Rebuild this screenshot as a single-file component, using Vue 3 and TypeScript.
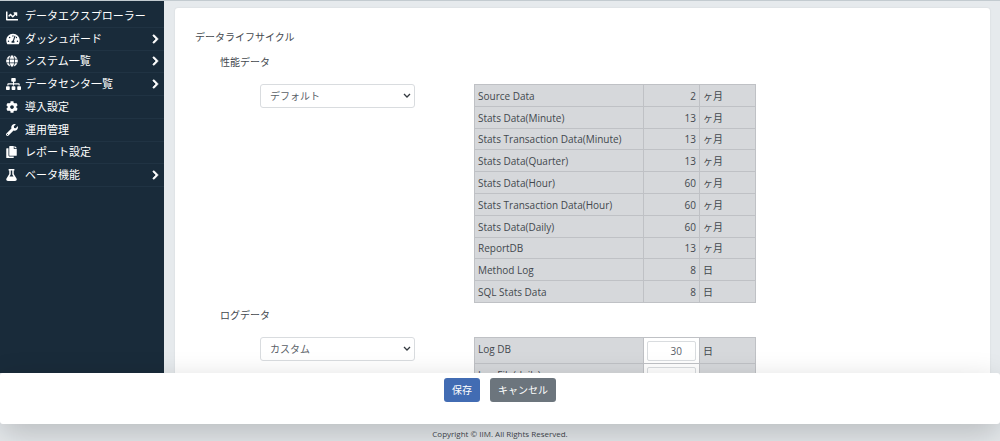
<script setup lang="ts">
interface MenuItem {
  label: string
  box: string
  size: number
  path: string
  children?: boolean
}
interface Retention {
  name: string
  value: number
  unit: string
}

const menu: MenuItem[] = [
  {
    label: 'データエクスプローラー', box: '0 0 512 512', size: 12,
    path: 'M496 384H64V80c0-8.84-7.16-16-16-16H16C7.16 64 0 71.16 0 80v336c0 17.67 14.33 32 32 32h464c8.84 0 16-7.16 16-16v-32c0-8.84-7.16-16-16-16zM464 96H345.94c-21.38 0-32.09 25.85-16.97 40.97l32.4 32.4L288 242.75l-73.37-73.37c-12.5-12.5-32.76-12.5-45.25 0l-68.69 68.69c-6.25 6.25-6.25 16.38 0 22.63l22.62 22.62c6.25 6.25 16.38 6.25 22.63 0L192 237.25l73.37 73.37c12.5 12.5 32.76 12.5 45.25 0l96-96 32.4 32.4c15.12 15.12 40.97 4.41 40.97-16.97V112c.01-8.84-7.15-16-15.99-16z',
  },
  {
    label: 'ダッシュボード', box: '0 0 576 512', size: 14, children: true,
    path: 'M288 32C128.94 32 0 160.94 0 320c0 52.8 14.25 102.26 39.06 144.8 5.61 9.62 16.3 15.2 27.44 15.2h443c11.14 0 21.83-5.58 27.44-15.2C561.75 422.26 576 372.8 576 320c0-159.06-128.94-288-288-288zm0 64c14.71 0 26.58 10.13 30.32 23.65-1.11 2.26-2.64 4.23-3.45 6.67l-9.22 27.67c-5.13 3.49-10.97 6.01-17.64 6.01-17.67 0-32-14.33-32-32S270.33 96 288 96zM96 384c-17.67 0-32-14.33-32-32s14.33-32 32-32 32 14.33 32 32-14.33 32-32 32zm48-160c-17.67 0-32-14.33-32-32s14.33-32 32-32 32 14.33 32 32-14.33 32-32 32zm246.77-72.41l-61.33 184C343.13 347.33 352 364.54 352 384c0 11.72-3.38 22.55-8.88 32H232.88c-5.5-9.45-8.88-20.28-8.88-32 0-33.94 26.5-61.43 59.9-63.59l61.34-184.01c4.17-12.56 17.73-19.45 30.36-15.17 12.57 4.19 19.35 17.79 15.17 30.36zm14.66 57.2l15.52-46.55c3.47-1.29 7.13-2.23 11.05-2.23 17.67 0 32 14.33 32 32s-14.33 32-32 32c-11.38-.01-20.89-6.28-26.57-15.22zM480 384c-17.67 0-32-14.33-32-32s14.33-32 32-32 32 14.33 32 32-14.33 32-32 32z',
  },
  {
    label: 'システム一覧', box: '0 0 496 512', size: 12, children: true,
    path: 'M336.5 160C322 70.7 287.8 8 248 8s-74 62.7-88.5 152h177zM152 256c0 22.2 1.2 43.5 3.3 64h185.3c2.1-20.5 3.3-41.8 3.3-64s-1.2-43.5-3.3-64H155.3c-2.1 20.5-3.3 41.8-3.3 64zm324.7-96c-28.6-67.9-86.5-120.4-158-141.6 24.4 33.8 41.2 84.7 50 141.6h108zM177.2 18.4C105.8 39.6 47.8 92.1 19.3 160h108c8.7-56.9 25.5-107.8 49.9-141.6zM487.4 192H372.7c2.1 21 3.3 42.5 3.3 64s-1.2 43-3.3 64h114.6c5.5-20.5 8.6-41.8 8.6-64s-3.1-43.5-8.5-64zM120 256c0-21.5 1.2-43 3.3-64H8.6C3.2 212.5 0 233.8 0 256s3.2 43.5 8.6 64h114.6c-2-21-3.2-42.5-3.2-64zm39.5 96c14.5 89.3 48.7 152 88.5 152s74-62.7 88.5-152h-177zm159.3 141.6c71.4-21.2 129.4-73.7 158-141.6h-108c-8.8 56.9-25.6 107.8-50 141.6zM19.3 352c28.6 67.9 86.5 120.4 158 141.6-24.4-33.8-41.2-84.7-50-141.6h-108z',
  },
  {
    label: 'データセンタ一覧', box: '0 0 640 512', size: 15, children: true,
    path: 'M128 352H32c-17.67 0-32 14.33-32 32v96c0 17.67 14.33 32 32 32h96c17.67 0 32-14.33 32-32v-96c0-17.67-14.33-32-32-32zm-24-80h192v48h48v-48h192v48h48v-57.59c0-21.17-17.23-38.41-38.41-38.41H344v-64h40c17.67 0 32-14.33 32-32V32c0-17.67-14.33-32-32-32H256c-17.67 0-32 14.33-32 32v96c0 17.67 14.33 32 32 32h40v64H94.41C73.23 224 56 241.23 56 262.41V320h48v-48zm264 80h-96c-17.67 0-32 14.33-32 32v96c0 17.67 14.33 32 32 32h96c17.67 0 32-14.33 32-32v-96c0-17.67-14.33-32-32-32zm240 0h-96c-17.67 0-32 14.33-32 32v96c0 17.67 14.33 32 32 32h96c17.67 0 32-14.33 32-32v-96c0-17.67-14.33-32-32-32z',
  },
  {
    label: '導入設定', box: '0 0 512 512', size: 12,
    path: 'M487.4 315.7l-42.6-24.6c4.3-23.2 4.3-47 0-70.2l42.6-24.6c4.9-2.8 7.1-8.6 5.5-14-11.1-35.6-30-67.8-54.7-94.6-3.8-4.1-10-5.1-14.8-2.3L380.8 110c-17.9-15.4-38.5-27.3-60.8-35.1V25.8c0-5.6-3.9-10.5-9.4-11.7-36.7-8.2-74.3-7.8-109.2 0-5.5 1.2-9.4 6.1-9.4 11.7V75c-22.2 7.9-42.8 19.8-60.8 35.1L88.7 85.5c-4.9-2.8-11-1.9-14.8 2.3-24.7 26.7-43.6 58.9-54.7 94.6-1.7 5.4.6 11.2 5.5 14L67.3 221c-4.3 23.2-4.3 47 0 70.2l-42.6 24.6c-4.9 2.8-7.1 8.6-5.5 14 11.1 35.6 30 67.8 54.7 94.6 3.8 4.1 10 5.1 14.8 2.3l42.6-24.6c17.9 15.4 38.5 27.3 60.8 35.1v49.2c0 5.6 3.9 10.5 9.4 11.7 36.7 8.2 74.3 7.8 109.2 0 5.5-1.2 9.4-6.1 9.4-11.7v-49.2c22.2-7.9 42.8-19.8 60.8-35.1l42.6 24.6c4.9 2.8 11 1.9 14.8-2.3 24.7-26.7 43.6-58.9 54.7-94.6 1.5-5.5-.7-11.3-5.6-14.1zM256 336c-44.1 0-80-35.9-80-80s35.9-80 80-80 80 35.9 80 80-35.9 80-80 80z',
  },
  {
    label: '運用管理', box: '0 0 512 512', size: 12,
    path: 'M507.73 109.1c-2.24-9.03-13.54-12.09-20.12-5.51l-74.36 74.36-67.88-11.31-11.31-67.88 74.36-74.36c6.62-6.62 3.43-17.9-5.66-20.16-47.38-11.74-99.55.91-136.58 37.93-39.64 39.64-50.55 97.1-34.05 147.2L18.74 402.76c-24.99 24.99-24.99 65.51 0 90.5 24.99 24.99 65.51 24.99 90.5 0l213.21-213.21c50.12 16.71 107.47 5.68 147.37-34.22 37.07-37.07 49.7-89.32 37.91-136.73zM64 472c-13.25 0-24-10.75-24-24 0-13.26 10.75-24 24-24s24 10.74 24 24c0 13.25-10.75 24-24 24z',
  },
  {
    label: 'レポート設定', box: '0 0 448 512', size: 11,
    path: 'M320 448v40c0 13.255-10.745 24-24 24H24c-13.255 0-24-10.745-24-24V120c0-13.255 10.745-24 24-24h72v296c0 30.879 25.121 56 56 56h168zm0-344V0H152c-13.255 0-24 10.745-24 24v368c0 13.255 10.745 24 24 24h272c13.255 0 24-10.745 24-24V128H344c-13.2 0-24-10.8-24-24zm120.971-31.029L375.029 7.029A24 24 0 0 0 358.059 0H352v96h96v-6.059a24 24 0 0 0-7.029-16.97z',
  },
  {
    label: 'ベータ機能', box: '0 0 448 512', size: 11, children: true,
    path: 'M437.2 403.5L320 215V64h8c13.3 0 24-10.7 24-24V24c0-13.3-10.7-24-24-24H120c-13.3 0-24 10.7-24 24v16c0 13.3 10.7 24 24 24h8v151L10.8 403.5C-18.5 450.6 15.3 512 70.9 512h306.2c55.7 0 89.4-61.5 60.1-108.5zM137.9 320l48.2-77.6c3.7-5.2 5.8-11.6 5.8-18.4V64h64v160c0 6.9 2.2 13.2 5.8 18.4l48.2 77.6h-172z',
  },
]

const performance: Retention[] = [
  { name: 'Source Data', value: 2, unit: 'ヶ月' },
  { name: 'Stats Data(Minute)', value: 13, unit: 'ヶ月' },
  { name: 'Stats Transaction Data(Minute)', value: 13, unit: 'ヶ月' },
  { name: 'Stats Data(Quarter)', value: 13, unit: 'ヶ月' },
  { name: 'Stats Data(Hour)', value: 60, unit: 'ヶ月' },
  { name: 'Stats Transaction Data(Hour)', value: 60, unit: 'ヶ月' },
  { name: 'Stats Data(Daily)', value: 60, unit: 'ヶ月' },
  { name: 'ReportDB', value: 13, unit: 'ヶ月' },
  { name: 'Method Log', value: 8, unit: '日' },
  { name: 'SQL Stats Data', value: 8, unit: '日' },
]

const logs: Retention[] = [
  { name: 'Log DB', value: 30, unit: '日' },
  { name: 'Log File(daily)', value: 30, unit: '日' },
]
</script>

<template>
  <div class="page">
    <div class="body">
      <nav class="sidebar">
        <ul class="menu">
          <li v-for="item in menu" :key="item.label">
            <a href="#">
              <span class="icon">
                <svg :viewBox="item.box" :width="item.size" height="12" aria-hidden="true">
                  <path fill="currentColor" :d="item.path" />
                </svg>
              </span>
              <span class="label">{{ item.label }}</span>
              <svg v-if="item.children" class="chevron" viewBox="0 0 320 512" aria-hidden="true">
                <path
                  fill="currentColor"
                  d="M285.476 272.971L91.132 467.314c-9.373 9.373-24.569 9.373-33.941 0l-22.667-22.667c-9.357-9.357-9.375-24.522-.04-33.901L188.505 256 34.484 101.255c-9.335-9.379-9.317-24.544.04-33.901l22.667-22.667c9.373-9.373 24.569-9.373 33.941 0L285.475 239.03c9.373 9.372 9.373 24.568.001 33.941z"
                />
              </svg>
            </a>
          </li>
        </ul>
      </nav>

      <main class="content">
        <section class="card">
          <h1>データライフサイクル</h1>

          <section class="group">
            <h2><label for="performance-mode">性能データ</label></h2>
            <div class="row">
              <div class="picker">
                <select id="performance-mode">
                  <option selected>デフォルト</option>
                  <option>カスタム</option>
                </select>
                <svg viewBox="0 0 8 6" aria-hidden="true"><path d="M1 1l3 3 3-3" /></svg>
              </div>
              <table class="performance">
                <tbody>
                  <tr v-for="r in performance" :key="r.name">
                    <td class="name">{{ r.name }}</td>
                    <td class="value">{{ r.value }}</td>
                    <td class="unit">{{ r.unit }}</td>
                  </tr>
                </tbody>
              </table>
            </div>
          </section>

          <section class="group">
            <h2><label for="log-mode">ログデータ</label></h2>
            <div class="row">
              <div class="picker">
                <select id="log-mode">
                  <option>デフォルト</option>
                  <option selected>カスタム</option>
                </select>
                <svg viewBox="0 0 8 6" aria-hidden="true"><path d="M1 1l3 3 3-3" /></svg>
              </div>
              <table class="logs">
                <tbody>
                  <tr v-for="(r, i) in logs" :key="r.name">
                    <td class="name"><label :for="`log-${i}`">{{ r.name }}</label></td>
                    <td class="edit"><input :id="`log-${i}`" type="text" inputmode="numeric" :value="r.value" /></td>
                    <td class="unit">{{ r.unit }}</td>
                  </tr>
                </tbody>
              </table>
            </div>
          </section>
        </section>
      </main>
    </div>

    <div class="actions">
      <button type="button" class="primary">保存</button>
      <button type="button" class="secondary">キャンセル</button>
    </div>
    <footer>Copyright © IIM. All Rights Reserved.</footer>
  </div>
</template>

<style>
body {
  margin: 0;
}
</style>

<style scoped>
* {
  box-sizing: border-box;
}
.page {
  display: flex;
  flex-direction: column;
  height: 100vh;
  background: #e6eaed;
  color: #43484e;
  font: 10px/16px "Open Sans", "Noto Sans CJK JP", sans-serif;
}
.body {
  flex: 1;
  min-height: 0;
  display: flex;
  overflow: hidden;
  border-top: 1px solid #c3cbd0;
}
.sidebar {
  flex: 0 0 164px;
  padding-top: 4px;
  background: #192b3a;
}
.menu {
  display: grid;
  grid-auto-rows: 1fr;
  height: 182px;
  margin: 0;
  padding: 0;
  list-style: none;
}
.menu li {
  display: flex;
  border-bottom: 1px solid #203343;
}
.menu a {
  flex: 1;
  display: flex;
  align-items: center;
  padding: 0 5px 0 6px;
  color: #fff;
  font-size: 11px;
  text-decoration: none;
}
.icon {
  flex: 0 0 19px;
  display: flex;
}
.label {
  flex: 1;
}
.chevron {
  width: 7px;
  height: 10px;
  stroke: currentColor;
  stroke-width: 36;
}
.content {
  flex: 1;
  min-width: 0;
  padding: 7px 10px 0 11px;
}
.card {
  padding: 21px 20px;
  border-radius: 3px;
  background: #fff;
  box-shadow: 0 0 2px rgba(0, 0, 0, 0.1);
}
h1,
h2 {
  margin: 0;
  font-size: 10px;
  font-weight: 400;
}
.group {
  padding: 9px 0 0 25px;
}
.group + .group {
  padding-top: 4px;
}
.row {
  display: grid;
  grid-template-columns: 214fr 496fr;
  align-items: start;
  margin-left: 40px;
  padding-top: 14px;
}
.picker {
  display: grid;
  align-items: center;
  width: 155px;
}
.picker select,
.picker svg {
  grid-area: 1 / 1;
}
.picker select {
  appearance: none;
  height: 24px;
  padding: 0 20px 0 9px;
  border: 1px solid #d9dcdf;
  border-radius: 3px;
  background: #fff;
  color: #5a6168;
  font: inherit;
}
.picker svg {
  justify-self: end;
  width: 8px;
  height: 6px;
  margin-right: 4px;
  fill: none;
  stroke: #343a40;
  stroke-width: 1.3;
  pointer-events: none;
}
table {
  width: 282px;
  border-collapse: collapse;
  table-layout: fixed;
  background: #d6d8db;
}
.performance {
  height: 219px;
}
td {
  padding: 1px 3px 0;
  border: 1px solid #bfc1c5;
}
.name {
  width: 169px;
}
.value,
.edit {
  width: 56px;
}
.value {
  text-align: right;
}
.logs td {
  height: 26px;
}
.logs .name {
  padding: 0 3px 4px;
}
.logs .edit {
  padding: 0 3px;
  background: #fff;
}
.edit input {
  display: block;
  width: 100%;
  height: 20px;
  padding: 0 13px 0 4px;
  border: 1px solid #d9dcdf;
  border-radius: 2px;
  background: #fff;
  color: #5a6168;
  font: inherit;
  text-align: right;
}
.actions {
  z-index: 1;
  display: flex;
  justify-content: center;
  gap: 10px;
  padding: 5px 0 22px;
  border-radius: 3px;
  background: #fff;
  box-shadow: 0 10px 32px rgba(0, 0, 0, 0.2);
}
button {
  height: 24px;
  padding: 0 8px;
  border: 0;
  border-radius: 3px;
  color: #fff;
  font: inherit;
}
.primary {
  background: #426cb3;
}
.secondary {
  background: #6c757d;
}
footer {
  height: 17px;
  padding-top: 2px;
  text-align: center;
  font-size: 8px;
}
</style>
